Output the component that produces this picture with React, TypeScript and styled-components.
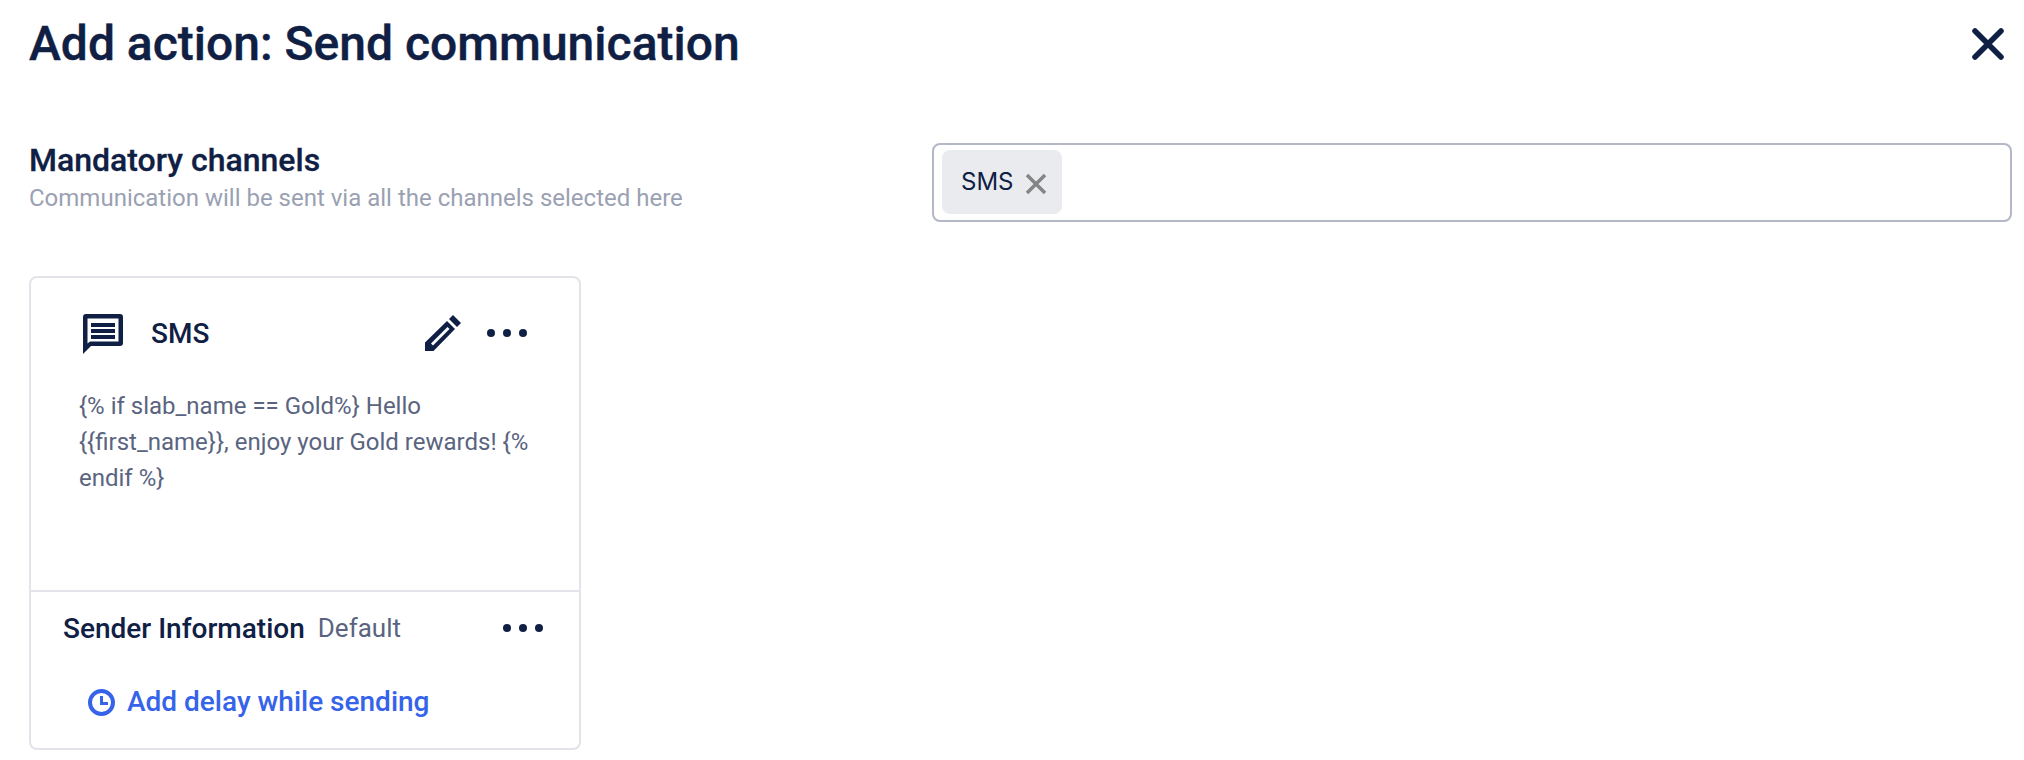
import React from 'react';
import styled, { createGlobalStyle } from 'styled-components';

const GlobalStyle = createGlobalStyle`
	html, body {
		margin: 0;
		padding: 0;
		background: #ffffff;
		font-family: Roboto, "Liberation Sans", sans-serif;
	}
`;

const navy = '#0f2044';

const Page = styled.div`
	width: 2024px;
	height: 760px;
	box-sizing: border-box;
	padding: 15px 12px 0 29px;
	overflow: hidden;
	color: ${navy};
`;
const TitleRow = styled.div`
	display: flex;
	align-items: center;
	justify-content: space-between;
	height: 58px;
	padding-right: 7px;
`;
const Title = styled.h1`
	margin: 0;
	font-size: 48px;
	line-height: 58px;
	font-weight: 500;
	-webkit-text-stroke: 0.4px ${navy};
`;
const CloseButton = styled.svg`
	width: 34px;
	height: 34px;
	display: block;
`;
const ChannelRow = styled.div`
	display: flex;
	justify-content: space-between;
	align-items: flex-start;
	margin-top: 70px;
`;
const ChannelLabel = styled.div`
	margin-top: -2px;
`;
const LabelTitle = styled.div`
	font-size: 32px;
	line-height: 38px;
	font-weight: 500;
	-webkit-text-stroke: 0.3px ${navy};
`;
const LabelHint = styled.div`
	font-size: 24px;
	line-height: 36px;
	margin-top: 1px;
	color: #9aa1b2;
`;
const ChannelInput = styled.div`
	width: 1080px;
	height: 79px;
	box-sizing: border-box;
	border: 2px solid #b4b8c6;
	border-radius: 8px;
	padding: 5px 8px;
	display: flex;
	align-items: flex-start;
`;
const Chip = styled.div`
	display: flex;
	align-items: center;
	height: 64px;
	width: 120px;
	box-sizing: border-box;
	padding: 0 0 2px 19px;
	border-radius: 8px;
	background: #e9ebef;
	font-family: Inter, sans-serif;
	font-size: 24px;
`;
const ChipClose = styled.svg`
	width: 22px;
	height: 22px;
	margin: 6px 0 0 12px;
`;
const Card = styled.div`
	width: 552px;
	height: 474px;
	box-sizing: border-box;
	margin-top: 54px;
	border: 2px solid #e3e4e9;
	border-radius: 8px;
	display: flex;
	flex-direction: column;
`;
const CardBody = styled.div`
	height: 314px;
	box-sizing: border-box;
	padding: 34px 51px 0 48px;
	border-bottom: 2px solid #e3e4e9;
`;
const CardHeader = styled.div`
	display: flex;
	align-items: center;
	height: 42px;
`;
const ChatIcon = styled.svg`
	width: 40px;
	height: 40px;
	margin: 1px 0 0 4px;
`;
const ChannelName = styled.div`
	margin-left: 28px;
	font-size: 28px;
	font-weight: 500;
	flex: 1;
`;
const Dots = styled.svg`
	display: block;
	width: 42px;
	height: 10px;
`;
const PencilIcon = styled.svg`
	width: 36px;
	height: 36px;
	margin-right: 25px;
`;
const Message = styled.div`
	margin-top: 34px;
	margin-right: -1px;
	font-size: 24px;
	line-height: 36px;
	color: #5a6480;
`;
const CardFooter = styled.div`
	padding: 17px 35px 0 32px;
`;
const SenderRow = styled.div`
	display: flex;
	align-items: center;
	height: 38px;
`;
const SenderLabel = styled.span`
	font-size: 28px;
	font-weight: 500;
`;
const SenderValue = styled.span`
	font-size: 26px;
	margin-left: 13px;
	flex: 1;
	color: #5a6480;
`;
const DelayLink = styled.a`
	display: flex;
	align-items: center;
	margin: 37px 0 0 25px;
	font-size: 28px;
	font-weight: 500;
	line-height: 36px;
	color: #3563e9;
`;
const ClockIcon = styled.svg`
	width: 27px;
	height: 27px;
	margin-right: 12px;
`;

const ThreeDots = () => (
	<Dots viewBox="0 0 42 10">
		<circle cx="5" cy="5" r="4" fill={navy} />
		<circle cx="21" cy="5" r="4" fill={navy} />
		<circle cx="37" cy="5" r="4" fill={navy} />
	</Dots>
);

const App: React.FC = () => {
	return (
		<Page>
			<GlobalStyle />
			<TitleRow>
				<Title>Add action: Send communication</Title>
				<CloseButton viewBox="0 0 34 34">
					<path d="M4 4 30 30M30 4 4 30" stroke={navy} strokeWidth="5.5" strokeLinecap="round" />
				</CloseButton>
			</TitleRow>
			<ChannelRow>
				<ChannelLabel>
					<LabelTitle>Mandatory channels</LabelTitle>
					<LabelHint>Communication will be sent via all the channels selected here</LabelHint>
				</ChannelLabel>
				<ChannelInput>
					<Chip>
						SMS
						<ChipClose viewBox="0 0 22 22">
							<path d="M2 2 20 20M20 2 2 20" stroke="#858585" strokeWidth="3.5" />
						</ChipClose>
					</Chip>
				</ChannelInput>
			</ChannelRow>
			<Card>
				<CardBody>
					<CardHeader>
						<ChatIcon viewBox="0 0 40 40">
							<path
								fillRule="evenodd"
								fill={navy}
								d="M3 0H37Q40 0 40 3V29Q40 32 37 32H8L0 40V3Q0 0 3 0ZM4.500 4.500V29.500L7 27.500H35.500V4.500Z"
							/>
							<path d="M8 9H32V13H8ZM8 15H32V19H8ZM8 21H32V25H8Z" fill={navy} />
						</ChatIcon>
						<ChannelName>SMS</ChannelName>
						<PencilIcon viewBox="0 0 36 36">
							<path
								fillRule="evenodd"
								fill={navy}
								d="M0 27.500 22 6 30 14 8.500 36H0ZM6 28.500 8 30.500 24.500 14 22.500 12Z"
							/>
							<path d="M24 4 28 0 36 8 32 12Z" fill={navy} />
						</PencilIcon>
						<ThreeDots />
					</CardHeader>
					<Message>
						{'{% if slab_name == Gold%} Hello {{first_name}}, enjoy your Gold rewards! {% endif %}'}
					</Message>
				</CardBody>
				<CardFooter>
					<SenderRow>
						<SenderLabel>Sender Information</SenderLabel>
						<SenderValue>Default</SenderValue>
						<ThreeDots />
					</SenderRow>
					<DelayLink>
						<ClockIcon viewBox="0 0 27 27">
							<circle cx="13.500" cy="13.500" r="11.500" fill="none" stroke="#3563e9" strokeWidth="4" />
							<path d="M13.500 7V14.500H20" fill="none" stroke="#3563e9" strokeWidth="3" />
						</ClockIcon>
						Add delay while sending
					</DelayLink>
				</CardFooter>
			</Card>
		</Page>
	);
};

export default App;
